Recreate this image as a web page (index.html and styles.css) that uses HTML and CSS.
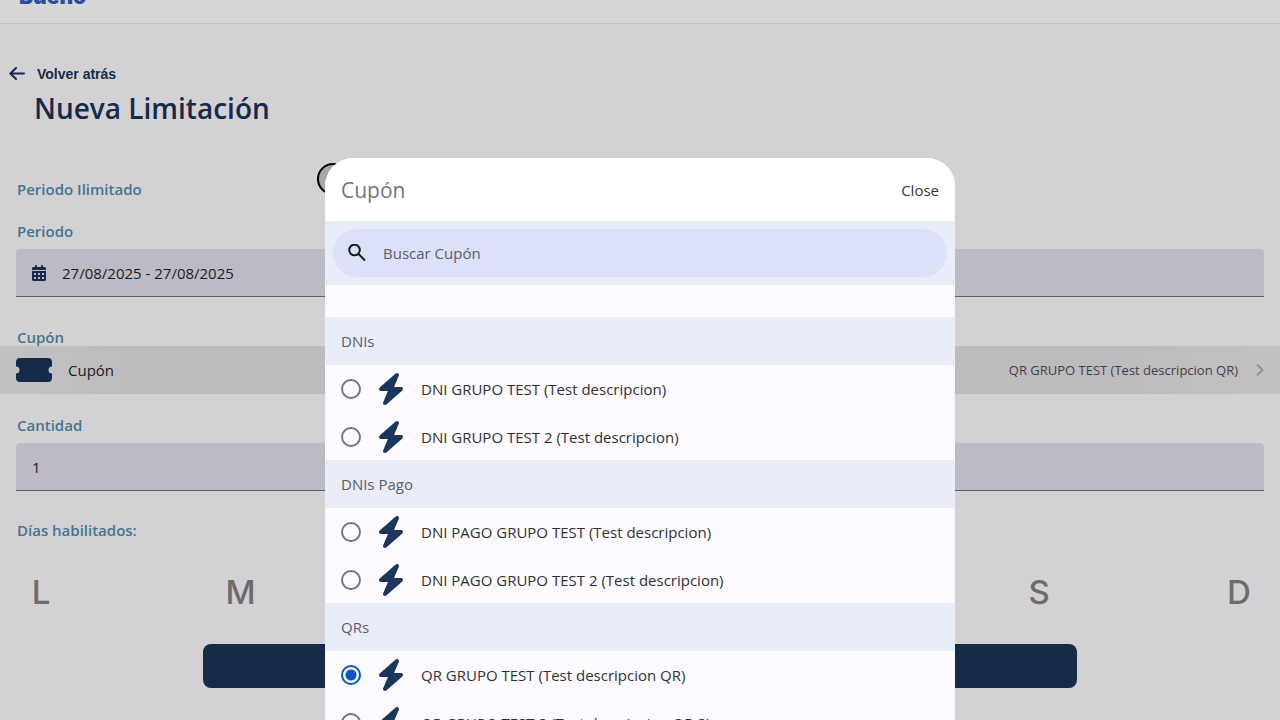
FILE: index.html
```html
<!DOCTYPE html>
<html lang="es">
<head>
<meta charset="utf-8">
<title>Nueva Limitación</title>
<meta name="viewport" content="width=device-width, initial-scale=1">
<link rel="stylesheet" href="styles.css">
</head>
<body>
<svg class="sprite" aria-hidden="true">
  <symbol id="bolt" viewBox="0 0 448 512"><path d="M349.400 44.600c5.900-13.700 1.500-29.700-10.600-38.500s-28.600-8-39.900 1.800l-256 224c-10 8.800-13.600 22.900-8.900 35.300S50.700 288 64 288H175.500L98.600 467.400c-5.900 13.700-1.500 29.700 10.600 38.500s28.600 8 39.900-1.800l256-224c10-8.800 13.600-22.900 8.900-35.300s-16.600-20.700-30-20.700H272.500L349.400 44.600z"/></symbol>
</svg>
<div class="app">
  <header class="topbar"><span class="brand">Bueno</span></header>
  <main class="page">
    <a class="back" href="#">
      <svg class="back-icon" viewBox="0 0 16 14" aria-hidden="true"><path d="M15 6.500H1.500M7 1L1.300 6.500L7 12"/></svg>
      Volver atrás
    </a>
    <h1 class="title">Nueva Limitación</h1>
    <div class="unlimited">
      <label class="label" for="unlimited">Periodo Ilimitado</label>
      <button class="knob" id="unlimited" type="button" role="switch" aria-checked="false"><span class="knob-dot"></span></button>
    </div>
    <label class="label" for="period">Periodo</label>
    <div class="field">
      <svg class="calendar" viewBox="0 0 448 512" aria-hidden="true"><path fill-rule="evenodd" d="M128 0c17.700 0 32 14.300 32 32v32h128V32c0-17.700 14.300-32 32-32s32 14.300 32 32v32h48c26.500 0 48 21.500 48 48v48H0v-48c0-26.500 21.500-48 48-48h48V32c0-17.700 14.300-32 32-32zM0 192h448v272c0 26.500-21.500 48-48 48H48c-26.500 0-48-21.500-48-48V192zM64 256v64h64v-64zM192 256v64h64v-64zM320 256v64h64v-64zM64 384v64h64v-64zM192 384v64h64v-64zM320 384v64h64v-64z"/></svg>
      <input class="input" id="period" type="text" value="27/08/2025 - 27/08/2025">
    </div>
    <span class="label label-coupon" id="coupon-label">Cupón</span>
    <button class="coupon" type="button" aria-describedby="coupon-label">
      <svg class="ticket" viewBox="0 0 36 24" aria-hidden="true"><path d="M4 0H32Q36 0 36 4V8.500A3.500 3.500 0 0 0 36 15.500V20Q36 24 32 24H4Q0 24 0 20V15.500A3.500 3.500 0 0 0 0 8.500V4Q0 0 4 0Z"/></svg>
      <span class="coupon-name">Cupón</span>
      <span class="coupon-value">QR GRUPO TEST (Test descripcion QR)</span>
      <svg class="chevron" viewBox="0 0 8 14" aria-hidden="true"><path d="M1 1.500L6.500 7L1 12.500"/></svg>
    </button>
    <label class="label" for="amount">Cantidad</label>
    <div class="field field-amount"><input class="input" id="amount" type="text" inputmode="numeric" value="1"></div>
    <span class="label">Días habilitados:</span>
    <div class="days">
      <button class="day" type="button">L</button>
      <button class="day" type="button">M</button>
      <button class="day" type="button">X</button>
      <button class="day" type="button">J</button>
      <button class="day" type="button">V</button>
      <button class="day" type="button">S</button>
      <button class="day" type="button">D</button>
    </div>
    <button class="submit" type="button" aria-label="Guardar"></button>
  </main>
  <section class="modal" role="dialog" aria-labelledby="modal-title">
    <header class="modal-head">
      <h2 class="modal-title" id="modal-title">Cupón</h2>
      <button class="close" type="button">Close</button>
    </header>
    <div class="search-bar">
      <div class="search">
        <svg class="search-icon" viewBox="0 0 18 18" aria-hidden="true"><circle cx="6.500" cy="6" r="5.300"/><path d="M10.500 10L17 16.500"/></svg>
        <input class="search-input" type="search" placeholder="Buscar Cupón" aria-label="Buscar Cupón">
      </div>
    </div>
    <div class="groups">
      <section class="group">
        <h3 class="group-title">DNIs</h3>
        <label class="option"><input class="radio" type="radio" name="coupon"><svg class="bolt"><use href="#bolt"/></svg>DNI GRUPO TEST (Test descripcion)</label>
        <label class="option"><input class="radio" type="radio" name="coupon"><svg class="bolt"><use href="#bolt"/></svg>DNI GRUPO TEST 2 (Test descripcion)</label>
      </section>
      <section class="group">
        <h3 class="group-title">DNIs Pago</h3>
        <label class="option"><input class="radio" type="radio" name="coupon"><svg class="bolt"><use href="#bolt"/></svg>DNI PAGO GRUPO TEST (Test descripcion)</label>
        <label class="option"><input class="radio" type="radio" name="coupon"><svg class="bolt"><use href="#bolt"/></svg>DNI PAGO GRUPO TEST 2 (Test descripcion)</label>
      </section>
      <section class="group">
        <h3 class="group-title">QRs</h3>
        <label class="option"><input class="radio" type="radio" name="coupon" checked><svg class="bolt"><use href="#bolt"/></svg>QR GRUPO TEST (Test descripcion QR)</label>
        <label class="option"><input class="radio" type="radio" name="coupon"><svg class="bolt"><use href="#bolt"/></svg>QR GRUPO TEST 2 (Test descripcion QR 2)</label>
      </section>
    </div>
  </section>
</div>
</body>
</html>
```
FILE: styles.css
```css
* { box-sizing: border-box; }
body {
  margin: 0;
  font-family: "Open Sans", "Noto Sans", sans-serif;
  font-size: 15px;
  line-height: 24px;
  color: #1b1b1f;
  background: #d3d1d3;
}
button, input { font: inherit; color: inherit; }
button { padding: 0; border: 0; background: none; }
.sprite { display: none; }
.app { position: relative; height: 100vh; overflow: hidden; }

.topbar {
  display: flex;
  align-items: flex-end;
  height: 24px;
  padding: 0 19px 16px;
  background: #d6d6d6;
  border-bottom: 1px solid #c0c3c7;
}
.brand {
  color: #2b4f9e;
  font-family: Inter, sans-serif;
  font-size: 21px;
  font-weight: 900;
  line-height: 20px;
}

.page { display: flex; flex-direction: column; padding-top: 38px; }
.back {
  display: flex;
  align-items: center;
  gap: 12px;
  padding-left: 9px;
  color: #162b4a;
  font-family: "Liberation Sans", sans-serif;
  font-size: 14px;
  font-weight: 700;
  text-decoration: none;
}
.back-icon { width: 16px; height: 14px; fill: none; stroke: #162b4a; stroke-width: 2; stroke-linecap: round; stroke-linejoin: round; }
.title { margin: 4px 34px 0; color: #162b4a; font-size: 28px; font-weight: 600; line-height: 36px; }
.label { padding-left: 17px; color: #447590; font-size: 15px; font-weight: 600; line-height: 24px; }
.unlimited { display: flex; align-items: flex-end; height: 38px; margin: 37px 0 18px; }
.unlimited .label { width: 317px; }
.knob { display: flex; align-items: center; justify-content: center; align-self: flex-start; width: 32px; height: 32px; border: 2px solid #000; border-radius: 50%; background: #a6a6a6; }
.knob-dot { width: 14px; height: 14px; border: 2px solid #000; border-radius: 50%; }
.field {
  display: flex;
  align-items: center;
  gap: 16px;
  height: 48px;
  margin: 6px 16px 28px;
  padding: 0 16px;
  background: #babbc5;
  border-bottom: 1px solid #5f6267;
  border-radius: 4px 4px 0 0;
}
.field-amount { margin-bottom: 27px; }
.input { flex: 1; min-width: 0; padding: 0; border: 0; outline: 0; background: none; }
.calendar { width: 14px; height: 16px; fill: #162b4a; }
.label-coupon { margin-bottom: -3px; }
.coupon {
  display: flex;
  align-items: center;
  height: 48px;
  margin-bottom: 19px;
  padding: 0 16px;
  text-align: left;
  background: linear-gradient(90deg, #c3c1c3, #bdbbbd 10%, #bdbbbd 88%, #c3c1c3);
}
.ticket { width: 36px; height: 24px; margin-right: 16px; fill: #162b4a; }
.coupon-name { flex: 1; }
.coupon-value { color: #3f4047; font-size: 13px; }
.chevron { width: 8px; height: 14px; margin-left: 18px; fill: none; stroke: #929193; stroke-width: 2; }
.days { display: flex; justify-content: space-between; margin: 25px 16px 27px; }
.day { width: 50px; height: 50px; color: #6c6c6c; font-family: Inter, sans-serif; font-size: 33px; font-weight: 500; line-height: 50px; }
.submit { align-self: center; width: 874px; max-width: 100%; height: 44px; border-radius: 8px; background: #162b4a; }

.modal {
  position: absolute;
  top: 158px;
  bottom: 0;
  left: 50%;
  width: 630px;
  max-width: 100%;
  margin-left: -315px;
  overflow: hidden;
  border-radius: 28px 28px 0 0;
  background: #fdfbff;
}
.modal-head { display: flex; align-items: center; justify-content: space-between; height: 63px; padding: 0 16px; background: #fff; }
.modal-title { margin: 0; color: #757575; font-size: 21px; font-weight: 400; line-height: 28px; }
.close { color: #35363a; }
.search-bar { padding: 8px; background: #e8edf9; }
.search { display: flex; align-items: center; gap: 17px; height: 48px; padding: 0 15px; border-radius: 24px; background: #dce1fa; }
.search-icon { width: 18px; height: 18px; fill: none; stroke: #1b1b1f; stroke-width: 2; }
.search-input { flex: 1; min-width: 0; padding: 0; border: 0; outline: 0; background: none; }
.search-input::placeholder { color: #5a5c68; opacity: 1; }
.groups { padding-top: 32px; }
.group + .group { margin-top: -1px; }
.group-title { position: relative; height: 48px; margin: 0; padding: 0 16px; color: #5a5c68; background: #e8edf9; font-size: 15px; font-weight: 400; line-height: 48px; }
.option { display: flex; align-items: center; height: 48px; padding: 0 16px; color: #303034; }
.radio { appearance: none; width: 20px; height: 20px; margin: 0; border: 2px solid #757478; border-radius: 50%; }
.radio:checked { border-color: #005ac1; background: radial-gradient(circle, #005ac1 5px, transparent 6px); }
.bolt { width: 28px; height: 32px; margin: 0 16px; fill: #1b365d; }
```
